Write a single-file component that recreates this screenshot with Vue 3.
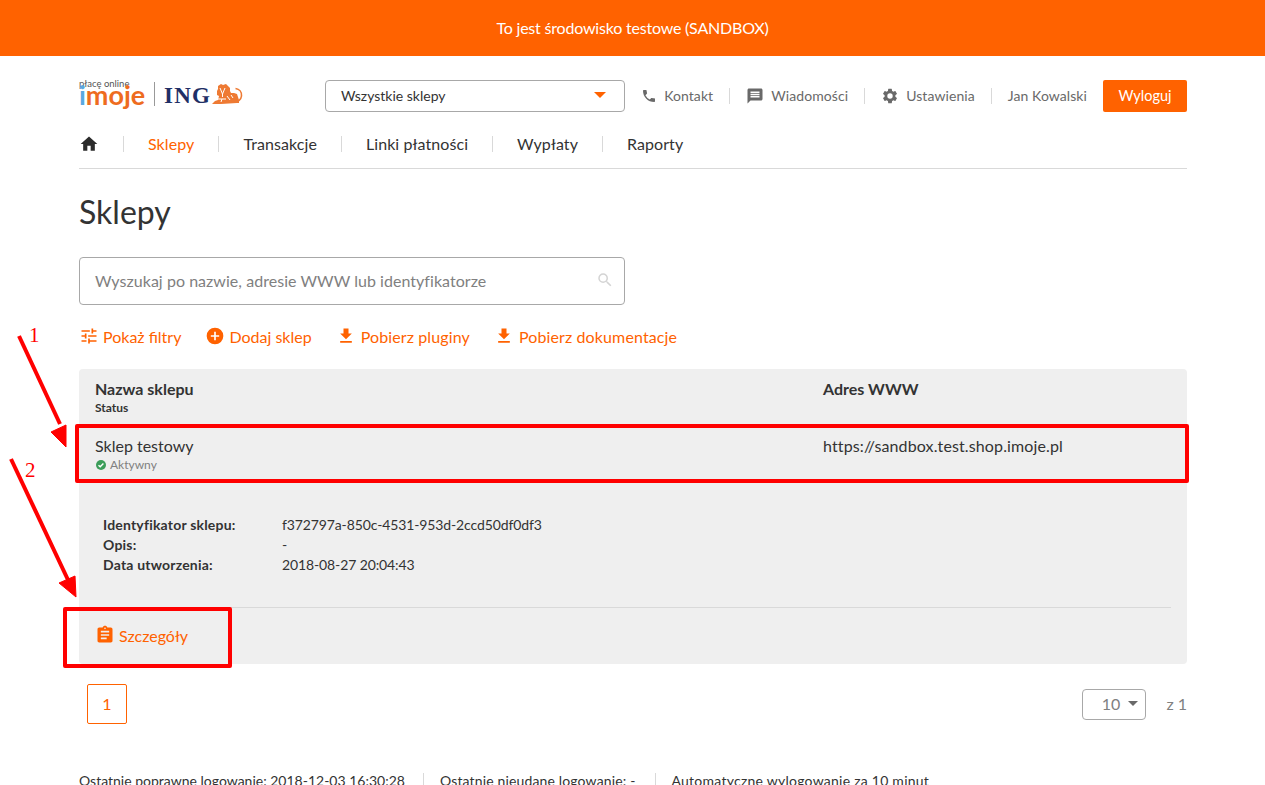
<template>
  <div class="page">
    <div class="sandbox-bar">To jest środowisko testowe (SANDBOX)</div>

    <div class="container">
      <header class="top">
        <div class="logo">
          <div class="logo-imoje">
            <span class="logo-small">płacę online</span>
            <span class="logo-big"><span class="logo-i">i</span>moje</span>
          </div>
          <span class="logo-sep"></span>
          <span class="logo-ing">ING</span>
          <svg class="logo-lion" width="31" height="22" viewBox="0 0 31 22">
            <path fill="#ee7a33" d="M1 20l2-2 3-1 1-4-2-1 0-4 1-2 0-3 3-2 2 1 3-1 2 2 2 2 0 3 1 2 3 0 3 1 1 3 1 3 0 3-2 0-16 1-9 0z"/>
            <path fill="none" stroke="#ee7a33" stroke-width="1.6" d="M23 18c3 1 6-1 6.500-5 .4-4-2-7-6-7.500"/>
            <path fill="none" stroke="#fff" stroke-width="1" d="M8 5l2.500 6 2.500-6M10.500 11v3M5 16h9M9 19l1-3M15 13l3 4M19 12l2 3"/>
          </svg>
        </div>

        <div class="shop-select">
          <span>Wszystkie sklepy</span>
          <span class="caret"></span>
        </div>

        <nav class="user-menu">
          <a class="user-link">
            <svg width="16" height="16" viewBox="0 0 24 24"><path d="M6.620 10.790a15.050 15.050 0 0 0 6.590 6.590l2.200-2.200c.27-.27.67-.36 1.020-.24 1.120.37 2.330.57 3.570.57.55 0 1 .45 1 1V20c0 .55-.45 1-1 1C10.610 21 3 13.390 3 4c0-.55.45-1 1-1h3.500c.55 0 1 .45 1 1 0 1.250.2 2.450.57 3.570.11.35.03.74-.25 1.020l-2.200 2.200z"/></svg>
            <span>Kontakt</span>
          </a>
          <a class="user-link">
            <svg width="18" height="18" viewBox="0 0 24 24"><path d="M20 2H4c-1.100 0-2 .9-2 2v18l4-4h14c1.100 0 2-.9 2-2V4c0-1.100-.9-2-2-2zm-2 12H6v-2h12v2zm0-3H6V9h12v2zm0-3H6V6h12v2z"/></svg>
            <span>Wiadomości</span>
          </a>
          <a class="user-link">
            <svg width="18" height="18" viewBox="0 0 24 24"><path d="M19.140 12.940c.04-.3.06-.61.06-.94s-.02-.64-.07-.94l2.030-1.580a.49.49 0 0 0 .12-.61l-1.920-3.320a.49.49 0 0 0-.59-.22l-2.390.96a7.030 7.030 0 0 0-1.620-.94l-.36-2.540a.48.48 0 0 0-.48-.41h-3.840a.48.48 0 0 0-.47.41l-.36 2.540c-.59.24-1.130.57-1.620.94l-2.390-.96a.48.48 0 0 0-.59.22L2.740 8.870a.48.48 0 0 0 .12.61l2.030 1.580c-.05.3-.09.63-.09.94s.02.64.07.94l-2.030 1.580a.49.49 0 0 0-.12.61l1.920 3.320c.12.22.37.29.59.22l2.390-.96c.5.38 1.030.7 1.620.94l.36 2.540c.05.24.24.41.48.41h3.840c.24 0 .44-.17.47-.41l.36-2.540c.59-.24 1.130-.56 1.620-.94l2.390.96c.22.08.47 0 .59-.22l1.920-3.320a.48.48 0 0 0-.12-.61l-2.010-1.580zM12 15.600A3.600 3.600 0 1 1 12 8.400a3.600 3.600 0 0 1 0 7.200z"/></svg>
            <span>Ustawienia</span>
          </a>
          <a class="user-link user-name"><span>Jan Kowalski</span></a>
        </nav>

        <button class="logout">Wyloguj</button>
      </header>

      <nav class="main-nav">
        <a class="nav-item nav-home">
          <svg width="20" height="20" viewBox="0 0 24 24"><path fill="#2b2b2b" d="M10 20v-6h4v6h5v-8h3L12 3 2 12h3v8z"/></svg>
        </a>
        <a v-for="item in navItems" :key="item" class="nav-item" :class="{ active: item === 'Sklepy' }">{{ item }}</a>
      </nav>

      <h1 class="title">Sklepy</h1>

      <div class="search">
        <span>Wyszukaj po nazwie, adresie WWW lub identyfikatorze</span>
        <svg width="18" height="18" viewBox="0 0 24 24"><path fill="#d4d4d4" d="M15.500 14h-.79l-.28-.27A6.470 6.470 0 0 0 16 9.500 6.500 6.500 0 1 0 9.500 16c1.610 0 3.090-.59 4.230-1.570l.27.28v.79l5 4.990L20.490 19l-4.990-5zm-6 0C7.010 14 5 11.990 5 9.500S7.010 5 9.500 5 14 7.010 14 9.500 11.990 14 9.500 14z"/></svg>
      </div>

      <div class="actions">
        <a class="action">
          <svg width="20" height="20" viewBox="0 0 24 24"><path d="M3 17v2h6v-2H3zM3 5v2h10V5H3zm10 16v-2h8v-2h-8v-2h-2v6h2zM7 9v2H3v2h4v2h2V9H7zm14 4v-2H11v2h10zm-6-4h2V7h4V5h-4V3h-2v6z"/></svg>
          Pokaż filtry
        </a>
        <a class="action">
          <svg width="20" height="20" viewBox="0 0 24 24"><path d="M12 2a10 10 0 1 0 0 20 10 10 0 0 0 0-20zm5 11h-4v4h-2v-4H7v-2h4V7h2v4h4v2z"/></svg>
          Dodaj sklep
        </a>
        <a class="action wide">
          <svg width="20" height="20" viewBox="0 0 24 24"><path d="M19 9h-4V3H9v6H5l7 7 7-7zM5 18v2h14v-2H5z"/></svg>
          Pobierz pluginy
        </a>
        <a class="action wide">
          <svg width="20" height="20" viewBox="0 0 24 24"><path d="M19 9h-4V3H9v6H5l7 7 7-7zM5 18v2h14v-2H5z"/></svg>
          Pobierz dokumentacje
        </a>
      </div>

      <section class="table">
        <div class="row head">
          <div class="col-name">
            <div class="th">Nazwa sklepu</div>
            <div class="th-sub">Status</div>
          </div>
          <div class="col-url th">Adres WWW</div>
        </div>
        <div class="row shop">
          <div class="col-name">
            <div class="shop-name">Sklep testowy</div>
            <div class="status">
              <svg width="12" height="12" viewBox="0 0 12 12"><circle cx="6" cy="6" r="5" fill="#3c9d5a"/><path d="M3.500 6.200l1.700 1.600 3.200-3.300" fill="none" stroke="#fff" stroke-width="1.400"/></svg>
              Aktywny
            </div>
          </div>
          <div class="col-url shop-url">https://sandbox.test.shop.imoje.pl</div>
        </div>
        <dl class="details">
          <template v-for="d in details" :key="d.label">
            <dt>{{ d.label }}</dt>
            <dd>{{ d.value }}</dd>
          </template>
        </dl>
        <div class="table-foot">
          <a class="action">
            <svg width="20" height="20" viewBox="0 0 24 24"><path d="M19 3h-4.180C14.400 1.840 13.300 1 12 1s-2.400.84-2.820 2H5c-1.100 0-2 .9-2 2v14c0 1.100.9 2 2 2h14c1.100 0 2-.9 2-2V5c0-1.100-.9-2-2-2zm-7 0c.55 0 1 .45 1 1s-.45 1-1 1-1-.45-1-1 .45-1 1-1zm2 14H7v-2h7v2zm3-4H7v-2h10v2zm0-4H7V7h10v2z"/></svg>
            Szczegóły
          </a>
        </div>
      </section>

      <div class="pager">
        <span class="page-btn">1</span>
        <div class="per-page">
          <span class="per-select">10<i class="caret-grey"></i></span>
          <span class="of">z 1</span>
        </div>
      </div>

      <footer class="foot">
        <span>Ostatnie poprawne logowanie: 2018-12-03 16:30:28</span>
        <span>Ostatnie nieudane logowanie: -</span>
        <span>Automatyczne wylogowanie za 10 minut</span>
      </footer>
    </div>

    <!-- adnotacje na zrzucie -->
    <div class="mark mark-row"></div>
    <div class="mark mark-btn"></div>
    <span class="mark-no no-1">1</span>
    <span class="mark-no no-2">2</span>
    <svg class="arrows" width="100" height="300" viewBox="0 0 100 300">
      <path d="M19 16L60 104" stroke="#f00" stroke-width="4" fill="none"/>
      <path d="M51 112L66 105L66 127z" fill="#f00" stroke="#f00"/>
      <path d="M11 139L69 262" stroke="#f00" stroke-width="4" fill="none"/>
      <path d="M59 263L75 256L76 277z" fill="#f00" stroke="#f00"/>
    </svg>
  </div>
</template>

<script setup>
const navItems = ['Sklepy', 'Transakcje', 'Linki płatności', 'Wypłaty', 'Raporty']

const details = [
  { label: 'Identyfikator sklepu:', value: 'f372797a-850c-4531-953d-2ccd50df0df3' },
  { label: 'Opis:', value: '-' },
  { label: 'Data utworzenia:', value: '2018-08-27 20:04:43' },
]
</script>

<style>
html, body {
  margin: 0;
  overflow: hidden;
  background: #fff;
}
</style>

<style scoped>
.page {
  position: relative;
  height: 785px;
  overflow: hidden;
  font-family: Lato, "Noto Sans", sans-serif;
  font-size: 16px;
  color: #333;
}

a {
  text-decoration: none;
  cursor: pointer;
}

.sandbox-bar {
  height: 56px;
  line-height: 56px;
  background: #ff6200;
  color: #fff;
  text-align: center;
  letter-spacing: -0.2px;
}

.container {
  margin: 0 78px 0 79px;
}

.top {
  display: flex;
  align-items: center;
  height: 32px;
  margin-top: 24px;
}

.logo {
  display: flex;
  align-items: center;
  flex: none;
  width: 246px;
}

.logo-imoje {
  display: flex;
  flex-direction: column;
  width: 75px;
  margin-bottom: 13px;
}

.logo-small {
  font-size: 9.500px;
  line-height: 12px;
  color: #555;
}

.logo-big {
  margin-top: -2px;
  font-size: 27px;
  line-height: 14px;
  font-weight: 700;
  color: #ee6c1f;
}

.logo-i {
  color: #5aa9e0;
}

.logo-sep {
  width: 1px;
  height: 24px;
  background: #999;
  margin-right: 9px;
  margin-bottom: 4px;
}

.logo-ing {
  font-family: "Liberation Serif", serif;
  font-size: 23px;
  line-height: 24px;
  font-weight: 700;
  color: #1f2f66;
  letter-spacing: 1.200px;
}

.logo-lion {
  margin-left: 1px;
  margin-bottom: 4px;
}

.shop-select {
  display: flex;
  align-items: center;
  justify-content: space-between;
  flex: none;
  box-sizing: border-box;
  width: 300px;
  height: 32px;
  padding: 0 18px 2px 15px;
  border: 1px solid #a8a8a8;
  border-radius: 4px;
  font-size: 14px;
}

.caret {
  border-top: 6px solid #ff6200;
  border-left: 6px solid transparent;
  border-right: 6px solid transparent;
}

.user-menu {
  display: flex;
  align-items: center;
  flex: 1;
  justify-content: flex-end;
}

.user-link {
  display: flex;
  align-items: center;
  gap: 7px;
  padding: 0 16px;
  height: 16px;
  font-size: 14px;
  letter-spacing: 0.08px;
  color: #696969;
  white-space: nowrap;
  border-right: 1px solid #d9d9d9;
}

.user-link span {
  margin-top: -2px;
}

.user-link svg {
  fill: #696969;
}

.user-name {
  border-right: none;
}

.logout {
  flex: none;
  width: 84px;
  height: 32px;
  padding: 0 0 2px;
  border: none;
  border-radius: 2px;
  background: #ff6200;
  color: #fff;
  font: inherit;
  font-size: 14.500px;
}

.main-nav {
  display: flex;
  align-items: center;
  box-sizing: border-box;
  height: 57px;
  padding-top: 7px;
  border-bottom: 1px solid #d9d9d9;
}

.nav-item {
  padding: 0 24px;
  height: 16px;
  line-height: 16px;
  letter-spacing: 0.08px;
  color: #333;
  border-left: 1px solid #d9d9d9;
}

.nav-home {
  padding: 0 24px 0 0;
  border-left: none;
  display: flex;
  align-items: center;
}

.active {
  color: #ff6200;
}

.title {
  margin: 22px 0 24px;
  font-size: 32px;
  line-height: 42px;
  font-weight: 400;
}

.search {
  display: flex;
  align-items: center;
  justify-content: space-between;
  box-sizing: border-box;
  width: 546px;
  height: 48px;
  padding: 0 10px 2px 15px;
  border: 1px solid #a8a8a8;
  border-radius: 4px;
  color: #808080;
  letter-spacing: 0.04px;
}

.actions {
  display: flex;
  gap: 24px;
  box-sizing: border-box;
  height: 64px;
  padding-bottom: 2px;
  align-items: center;
}

.action {
  display: flex;
  align-items: center;
  gap: 4px;
  color: #ff6200;
}

.action svg {
  fill: #ff6200;
}

.wide {
  gap: 5px;
  letter-spacing: 0.12px;
}

.table {
  background: #efefef;
  border-radius: 4px;
  height: 295px;
}

.row {
  display: flex;
  padding: 0 16px;
}

.col-name {
  width: 728px;
}

.head {
  height: 56px;
  padding-top: 10px;
  box-sizing: border-box;
}

.th {
  font-weight: 700;
  line-height: 20px;
}

.th-sub {
  font-size: 12px;
  font-weight: 700;
  line-height: 18px;
}

.shop {
  height: 56px;
  padding-top: 11px;
  box-sizing: border-box;
  line-height: 20px;
}

.shop-url {
  letter-spacing: 0.12px;
}

.status {
  display: flex;
  align-items: center;
  gap: 3px;
  font-size: 12px;
  line-height: 18px;
  color: #808080;
}

.details {
  display: grid;
  grid-template-columns: 179px 1fr;
  align-content: start;
  margin: 0;
  padding: 34px 24px 0;
  font-size: 14px;
  line-height: 20px;
  height: 126px;
  box-sizing: border-box;
}

dt {
  font-weight: 700;
  letter-spacing: 0.2px;
}

dd {
  margin: 0;
  letter-spacing: -0.12px;
}

.table-foot {
  margin: 0 16px;
  height: 57px;
  box-sizing: border-box;
  border-top: 1px solid #d9d9d9;
  padding-bottom: 2px;
  display: flex;
  align-items: center;
}

.pager {
  display: flex;
  align-items: center;
  justify-content: space-between;
  margin-top: 20px;
  padding: 0 0 0 8px;
}

.page-btn {
  box-sizing: border-box;
  width: 40px;
  height: 40px;
  line-height: 38px;
  text-align: center;
  border: 1px solid #ff6200;
  border-radius: 2px;
  color: #ff6200;
}

.per-page {
  display: flex;
  align-items: center;
  gap: 20px;
  color: #808080;
}

.per-select {
  display: flex;
  align-items: center;
  justify-content: flex-end;
  gap: 8px;
  box-sizing: border-box;
  width: 64px;
  height: 31px;
  padding: 0 7px 2px 0;
  border: 1px solid #a8a8a8;
  border-radius: 4px;
}

.of {
  margin-top: -2px;
}

.caret-grey {
  border-top: 5px solid #696969;
  border-left: 5px solid transparent;
  border-right: 5px solid transparent;
}

.foot {
  display: flex;
  margin-top: 49px;
  font-size: 14px;
  line-height: 16px;
}

.foot span {
  padding: 0 19px 0 16px;
  border-left: 1px solid #d9d9d9;
  letter-spacing: 0.15px;
}

.foot span:first-child {
  padding: 0 18px 0 0;
  border-left: none;
  letter-spacing: 0;
}

.foot span:last-child {
  letter-spacing: 0.25px;
}

/* czerwone ramki i strzałki */
.mark {
  position: absolute;
  box-sizing: border-box;
  border: 4px solid #f00;
  border-radius: 2px;
}

.mark-row {
  left: 75px;
  top: 424px;
  width: 1114px;
  height: 59px;
}

.mark-btn {
  left: 63px;
  top: 607px;
  width: 169px;
  height: 61px;
}

.mark-no {
  position: absolute;
  font-family: "Liberation Serif", serif;
  font-size: 21px;
  line-height: 24px;
  color: #f00;
}

.no-1 {
  left: 29px;
  top: 323px;
}

.no-2 {
  left: 25px;
  top: 458px;
}

.arrows {
  position: absolute;
  left: 0;
  top: 320px;
}
</style>
